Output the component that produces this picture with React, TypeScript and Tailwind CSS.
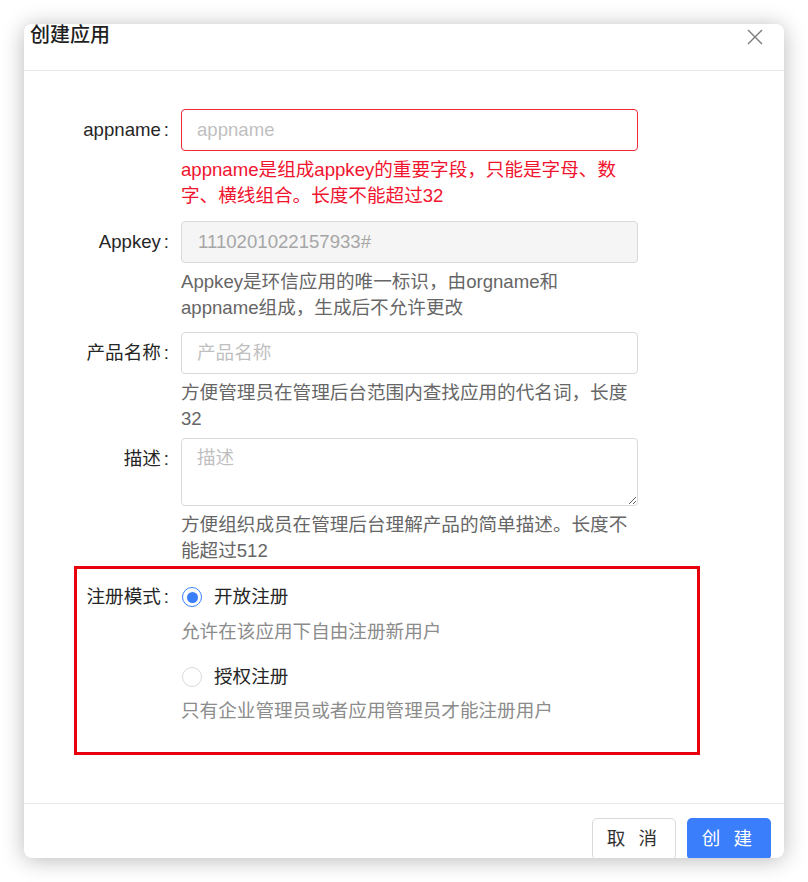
import React from 'react';

const font = "font-['Liberation_Sans','Noto_Sans_CJK_SC',sans-serif]";

function Label({ text }: { text: string }) {
  return (
    <div className="w-[157px] shrink-0 text-right text-[18.6px] leading-[42px] text-[#262626]">
      {text}
      <span className="ml-[3px] mr-[12px]">:</span>
    </div>
  );
}

function Radio({ checked }: { checked: boolean }) {
  return (
    <span
      className={
        checked
          ? 'flex h-[20px] w-[20px] items-center justify-center rounded-full border border-[#3a7efc] bg-white'
          : 'flex h-[20px] w-[20px] items-center justify-center rounded-full border border-[#d9d9d9] bg-white'
      }
    >
      {checked && <span className="h-[11px] w-[11px] rounded-full bg-[#3a7efc]" />}
    </span>
  );
}

export default function App() {
  return (
    <div className={`h-[882px] w-[808px] bg-white pl-[24px] pt-[24px] ${font}`}>
      <div className="flex h-[834px] w-[760px] flex-col overflow-hidden rounded-[8px] bg-white shadow-[0_2px_22px_rgba(0,0,0,0.28)]">
        {/* Header */}
        <div className="flex h-[47px] shrink-0 items-start justify-between border-b border-[#e8e8e8]">
          <div className="pl-[6px] text-[20px] leading-[22px] font-medium text-[#1f1f1f]">创建应用</div>
          <svg className="mr-[21px] mt-[5px]" width="16" height="16" viewBox="0 0 16 16" fill="none">
            <path d="M1 1L15 15M15 1L1 15" stroke="#7a7a7a" strokeWidth="1.4" />
          </svg>
        </div>

        {/* Body */}
        <div className="flex-1 pt-[38px]">
          {/* appname */}
          <div className="mb-[12px] flex">
            <Label text="appname" />
            <div className="w-[457px]">
              <input
                className="h-[42px] w-full rounded-[4px] border border-[#f0283c] px-[15px] text-[18.6px] text-[#262626] outline-none placeholder:text-[#bfbfbf]"
                placeholder="appname"
              />
              <div className="mt-[6px] pr-[5px] text-[18.6px] leading-[26px] text-[#f0142f]">
                appname是组成appkey的重要字段，只能是字母、数字、横线组合。长度不能超过32
              </div>
            </div>
          </div>

          {/* Appkey */}
          <div className="mb-[11px] flex">
            <Label text="Appkey" />
            <div className="w-[457px]">
              <div className="flex h-[42px] w-full items-center rounded-[4px] border border-[#d9d9d9] bg-[#f5f5f5] px-[16px] text-[18.6px] text-[#a6a6a6]">
                1110201022157933#
              </div>
              <div className="mt-[6px] pr-[5px] text-[18.6px] leading-[26px] text-[#666666]">
                Appkey是环信应用的唯一标识，由orgname和appname组成，生成后不允许更改
              </div>
            </div>
          </div>

          {/* 产品名称 */}
          <div className="mb-[6px] flex">
            <Label text="产品名称" />
            <div className="w-[457px]">
              <input
                className="h-[42px] w-full rounded-[4px] border border-[#d9d9d9] px-[15px] text-[18.6px] text-[#262626] outline-none placeholder:text-[#bfbfbf]"
                placeholder="产品名称"
              />
              <div className="mt-[6px] pr-[5px] text-[18.6px] leading-[26px] text-[#666666]">
                方便管理员在管理后台范围内查找应用的代名词，长度32
              </div>
            </div>
          </div>

          {/* 描述 */}
          <div className="mb-[2px] flex">
            <Label text="描述" />
            <div className="w-[457px]">
              <textarea
                className="block h-[68px] w-full rounded-[4px] border border-[#d9d9d9] px-[15px] py-[6px] text-[18.6px] leading-[26px] text-[#262626] outline-none placeholder:text-[#bfbfbf]"
                placeholder="描述"
              />
              <div className="mt-[6px] pr-[5px] text-[18.6px] leading-[26px] text-[#666666]">
                方便组织成员在管理后台理解产品的简单描述。长度不能超过512
              </div>
            </div>
          </div>

          {/* 注册模式 */}
          <div className="ml-[50px] flex w-[626px] border-[3px] border-[#e8000f] pb-[28px] pt-[15px]">
            <div className="w-[104px] shrink-0 text-right text-[18.6px] leading-[26px] text-[#262626]">
              注册模式
              <span className="ml-[3px] mr-[12px]">:</span>
            </div>
            <div className="flex flex-col">
              <div className="flex h-[26px] items-center">
                <span className="ml-[1px]">
                  <Radio checked />
                </span>
                <span className="ml-[12px] text-[18.6px] leading-[26px] text-[#262626]">开放注册</span>
              </div>
              <div className="mt-[9px] text-[18.6px] leading-[26px] text-[#8c8c8c]">允许在该应用下自由注册新用户</div>
              <div className="mt-[19px] flex h-[26px] items-center">
                <span className="ml-[1px]">
                  <Radio checked={false} />
                </span>
                <span className="ml-[12px] text-[18.6px] leading-[26px] text-[#262626]">授权注册</span>
              </div>
              <div className="mt-[8px] text-[18.6px] leading-[26px] text-[#8c8c8c]">只有企业管理员或者应用管理员才能注册用户</div>
            </div>
          </div>
        </div>

        {/* Footer */}
        <div className="flex h-[55px] shrink-0 items-start justify-end gap-[11px] border-t border-[#e8e8e8] pr-[13px] pt-[14px]">
          <button className="h-[42px] w-[84px] shrink-0 rounded-[5px] border border-[#d9d9d9] bg-white text-[18.6px] tracking-[4px] text-[#333333]">
            取 消
          </button>
          <button className="h-[42px] w-[84px] shrink-0 rounded-[5px] bg-[#3a7efc] text-[18.6px] tracking-[4px] text-white">
            创 建
          </button>
        </div>
      </div>
    </div>
  );
}
